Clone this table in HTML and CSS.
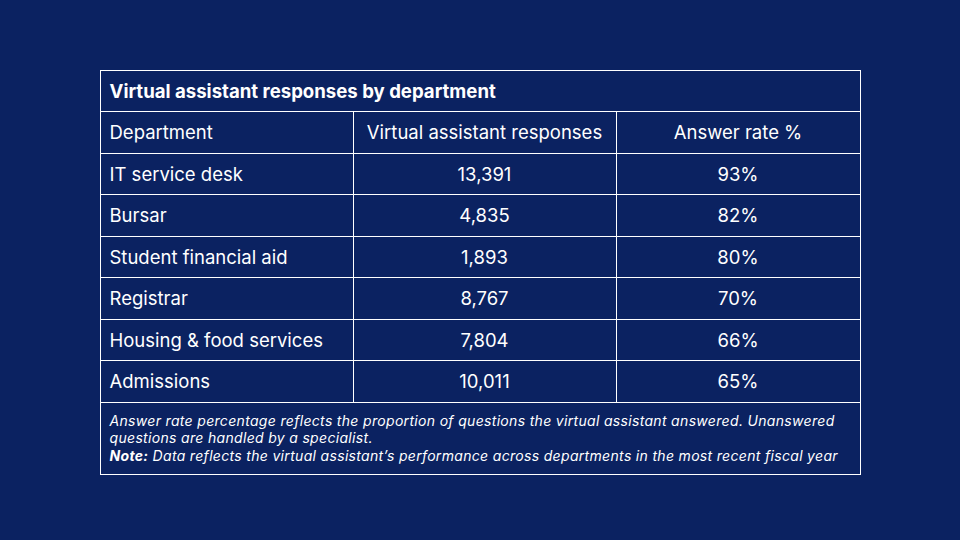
FILE: index.html
```html
<!DOCTYPE html>
<html lang="en">
<head>
<meta charset="utf-8">
<link rel="stylesheet" href="styles.css">
<title>Virtual assistant responses</title>
</head>
<body>
<main class="page">
  <table class="data">
    <caption class="title">Virtual assistant responses by department</caption>
    <colgroup>
      <col class="c1"><col class="c2"><col class="c3">
    </colgroup>
    <thead>
      <tr>
        <th class="left">Department</th>
        <th>Virtual assistant responses</th>
        <th>Answer rate %</th>
      </tr>
    </thead>
    <tbody>
      <tr><td class="left">IT service desk</td><td>13,391</td><td>93%</td></tr>
      <tr><td class="left">Bursar</td><td>4,835</td><td>82%</td></tr>
      <tr><td class="left">Student financial aid</td><td>1,893</td><td>80%</td></tr>
      <tr><td class="left">Registrar</td><td>8,767</td><td>70%</td></tr>
      <tr><td class="left">Housing &amp; food services</td><td>7,804</td><td>66%</td></tr>
      <tr><td class="left">Admissions</td><td>10,011</td><td>65%</td></tr>
    </tbody>
    <tfoot>
      <tr>
        <td colspan="3" class="foot">Answer rate percentage reflects the proportion of questions the virtual assistant answered. Unanswered questions are handled by a specialist.<br><b>Note:</b> Data reflects the virtual assistant’s performance across departments in the most recent fiscal year</td>
      </tr>
    </tfoot>
  </table>
</main>
</body>
</html>
```
FILE: styles.css
```css
html, body {
  margin: 0;
  padding: 0;
  background: #0b2261;
}
.page {
  width: 960px;
  height: 540px;
  display: flex;
  justify-content: center;
  padding-top: 70px;
  box-sizing: border-box;
  font-family: Inter, "Noto Sans", sans-serif;
  color: #ffffff;
}
.data {
  width: 761px;
  border-collapse: collapse;
  border: 1px solid #ffffff;
  align-self: flex-start;
}
.title {
  caption-side: top;
  text-align: left;
  font-weight: 700;
  font-size: 18.6px;
  height: 41px;
  line-height: 40px;
  padding: 0 9px;
  border: 1px solid #ffffff;
  border-bottom: none;
  box-sizing: border-box;
}
.c1 { width: 253px; }
.c2 { width: 263px; }
.c3 { width: 244px; }
th, td {
  border: 1px solid #ffffff;
  font-size: 18.5px;
  font-weight: 400;
  text-align: center;
  height: 41.5px;
  padding: 0 9px;
  box-sizing: border-box;
}
.left { text-align: left; }
.foot {
  text-align: left;
  font-size: 14px;
  letter-spacing: 0.32px;
  font-style: italic;
  line-height: 17.5px;
  padding: 9px 9px 10px 9px;
  height: auto;
}
.foot b { font-weight: 700; }
```
